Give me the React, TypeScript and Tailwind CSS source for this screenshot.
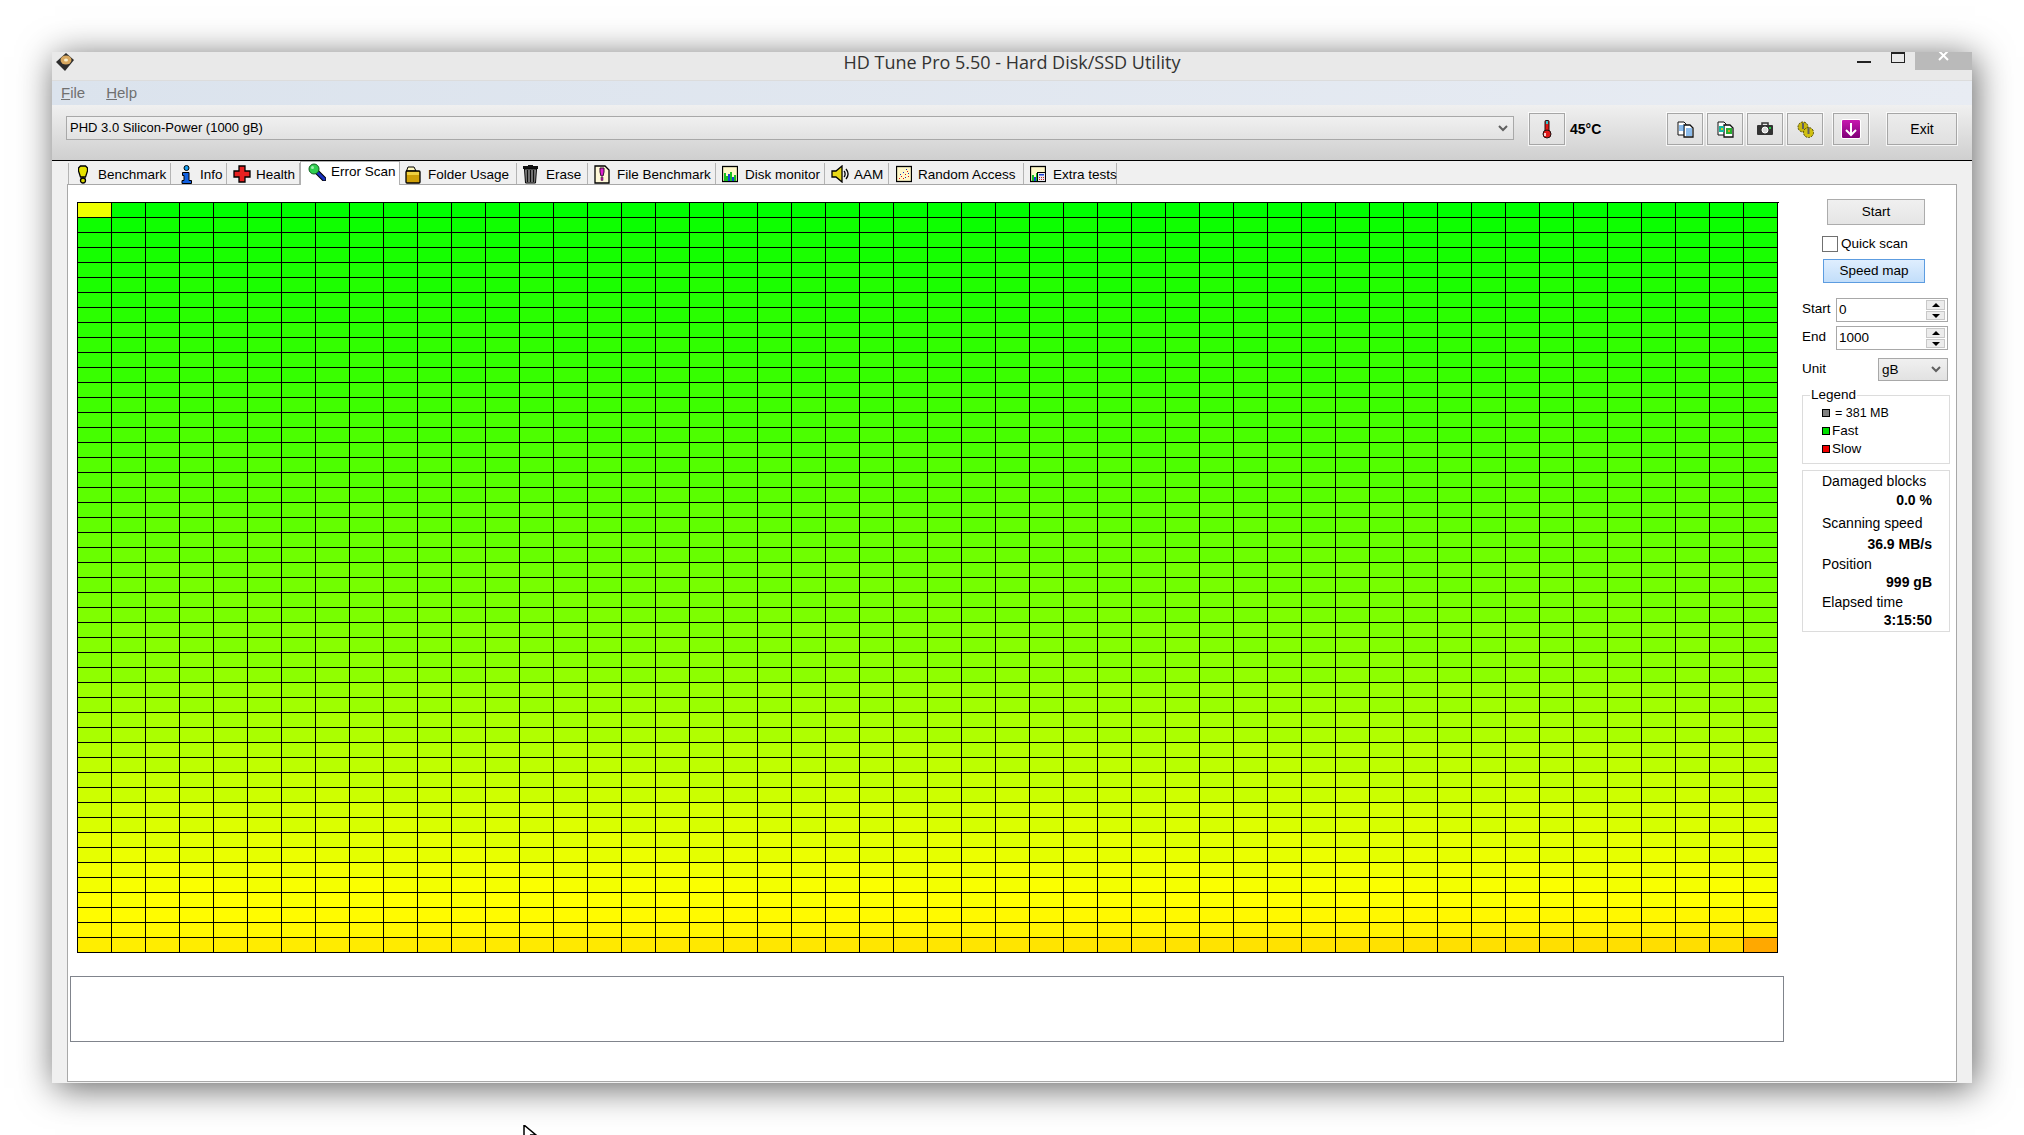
import type { ReactNode } from 'react';

const font = "font-['Liberation_Sans',Arial,sans-serif]";

// colour of one block on the speed map
function cellColor(row: number, col: number) {
  if (row === 0 && col === 0) return '#eeff00';
  if (row === 49 && col === 49) return '#ffa800';
  const noise = ((row * 7 + col * 13) % 5) * 2 - 4;
  let red = row <= 30 ? (row === 0 ? 0 : 10 + row * 4.2) : 136 + (row - 30) * 7.4;
  red = Math.max(0, Math.min(255, Math.round(red + (row === 0 ? 0 : noise))));
  let green = 255;
  if (row === 47) green = 252 - col * 0.1;
  if (row === 48) green = 248 - col * 0.16;
  if (row === 49) green = 238 - col * 0.34;
  return `rgb(${red},${Math.round(green)},0)`;
}

const rows = Array.from({ length: 50 }, (_, i) => i);
const cols = Array.from({ length: 50 }, (_, i) => i);

function Icon({ children, w = 16, h = 16 }: { children: ReactNode; w?: number; h?: number }) {
  return (
    <svg width={w} height={h} viewBox={`0 0 ${w} ${h}`} className="block shrink-0 -mt-[2px]">
      {children}
    </svg>
  );
}

const tabs = [
  {
    label: 'Benchmark', width: 'w-[103px]', pad: 'pl-[9px]', box: 'w-[20px]',
    icon: (
      <Icon w={10} h={19}>
        <path d="M2.500 1h5l2 2v3l-2 6h-5l-2-6v-3z" fill="#e6e200" stroke="#000" strokeWidth="1.300" />
        <circle cx="5" cy="15.500" r="2.500" fill="#d8d400" stroke="#000" strokeWidth="1.300" />
      </Icon>
    ),
  },
  {
    label: 'Info', width: 'w-[56px]', pad: 'pl-[9px]', box: 'w-[20px]',
    icon: (
      <Icon w={13} h={19}>
        <circle cx="6.500" cy="3" r="2.500" fill="#18a0f0" stroke="#000" />
        <path d="M2.500 7.500h6.500v8h2.500v3h-9.500v-3h2v-5h-1.500z" fill="#1060e0" stroke="#000" />
      </Icon>
    ),
  },
  {
    label: 'Health', width: 'w-[73px]', pad: 'pl-[6px]', box: 'w-[23px]',
    icon: (
      <Icon w={18} h={18}>
        <path d="M6 1h6v5h5v6h-5v5h-6v-5h-5v-6h5z" fill="#e82020" stroke="#000" strokeWidth="1.300" />
      </Icon>
    ),
  },
  {
    label: 'Error Scan', width: 'w-[100px]', pad: 'pl-[7px]', box: 'w-[23px]', active: true,
    icon: (
      <Icon w={18} h={18}>
        <path d="M9 9l7 7" stroke="#000" strokeWidth="5" strokeLinecap="round" />
        <path d="M9 9l7 7" stroke="#1830c0" strokeWidth="3" strokeLinecap="round" />
        <circle cx="6" cy="6" r="5" fill="#30d050" stroke="#106020" />
        <circle cx="4.500" cy="4.500" r="1.500" fill="#a0f0b0" />
      </Icon>
    ),
  },
  {
    label: 'Folder Usage', width: 'w-[117px]', pad: 'pl-[5px]', box: 'w-[23px]',
    icon: (
      <Icon w={16} h={19}>
        <path d="M1.500 6l1.500-4h6l2 4z" fill="#fff8c0" stroke="#000" />
        <rect x="1" y="6" width="14" height="12" rx="1" fill="#d0a008" stroke="#000" strokeWidth="1.300" />
        <rect x="2" y="7" width="12" height="3" fill="#f0d040" />
      </Icon>
    ),
  },
  {
    label: 'Erase', width: 'w-[71px]', pad: 'pl-[6px]', box: 'w-[23px]',
    icon: (
      <Icon w={15} h={19}>
        <rect x="0" y="1" width="15" height="3" fill="#101010" />
        <rect x="5" y="0" width="5" height="2" fill="#101010" />
        <path d="M1.500 4h12l-1 14h-10z" fill="#909090" stroke="#000" />
        <path d="M4.500 5v12M7.500 5v12M10.500 5v12" stroke="#101010" strokeWidth="1.500" />
      </Icon>
    ),
  },
  {
    label: 'File Benchmark', width: 'w-[128px]', pad: 'pl-[6px]', box: 'w-[23px]',
    icon: (
      <Icon w={16} h={19}>
        <path d="M1 1h10l4 4v13h-14z" fill="#fff8d8" stroke="#000" strokeWidth="1.300" />
        <path d="M6 3h4v4l-1 4h-2l-1-4z" fill="#e020d0" stroke="#301030" />
        <rect x="7" y="12.500" width="2" height="3" fill="#c010b0" stroke="#301030" strokeWidth="0.500" />
      </Icon>
    ),
  },
  {
    label: 'Disk monitor', width: 'w-[109px]', pad: 'pl-[6px]', box: 'w-[23px]',
    icon: (
      <Icon w={16} h={18}>
        <rect x="0.500" y="1.500" width="15" height="15" fill="#fff8c8" stroke="#000" strokeWidth="1.300" />
        <path d="M2 16v-8h2v8zM4 16v-5h2v5zM8 16v-9h2v9zM12 16v-6h2v6z" fill="#18c020" />
        <path d="M6 16v-7h2v7zM10 16v-4h2v4z" fill="#1840d8" />
      </Icon>
    ),
  },
  {
    label: 'AAM', width: 'w-[64px]', pad: 'pl-[6px]', box: 'w-[23px]',
    icon: (
      <Icon w={18} h={18}>
        <path d="M1 6h4l6-5v16l-6-5h-4z" fill="#e8d818" stroke="#000" strokeWidth="1.300" />
        <path d="M13 6c1.500 1.500 1.500 4.500 0 6M15 4c2.500 3 2.500 7 0 10" fill="none" stroke="#000" strokeWidth="1.300" />
      </Icon>
    ),
  },
  {
    label: 'Random Access', width: 'w-[135px]', pad: 'pl-[7px]', box: 'w-[22px]',
    icon: (
      <Icon w={16} h={18}>
        <rect x="0.500" y="1.500" width="15" height="15" fill="#fff8c8" stroke="#000" strokeWidth="1.300" />
        <path d="M3 13h1v1h-1zM5 11h1v1h-1zM7 13h1v1h-1zM9 9h1v1h-1zM11 6h1v1h-1zM12 11h1v1h-1z" fill="#e01010" />
        <path d="M4 9h1v1h-1zM7 7h1v1h-1zM10 4h1v1h-1zM12 8h1v1h-1zM9 12h1v1h-1z" fill="#1030c0" />
      </Icon>
    ),
  },
  {
    label: 'Extra tests', width: 'w-[93px]', pad: 'pl-[6px]', box: 'w-[23px]',
    icon: (
      <Icon w={16} h={18}>
        <rect x="0.500" y="1.500" width="15" height="15" fill="#fff8c8" stroke="#000" strokeWidth="1.300" />
        <path d="M2 16v-6h2v6zM6 16v-8h1v8z" fill="#18c020" />
        <path d="M4 16v-4h2v4z" fill="#1840d8" />
        <rect x="7.500" y="7.500" width="8" height="9" fill="#e8e8f0" stroke="#000" />
        <rect x="9" y="9" width="5" height="1.500" fill="#1840d8" />
        <path d="M9 12h1v1h-1zM11 12h1v1h-1zM13 12h1v1h-1zM9 14h1v1h-1zM11 14h1v1h-1zM13 14h1v1h-1z" fill="#d02020" />
      </Icon>
    ),
  },
];

function ToolButton({ children, width = 'w-[36px]' }: { children: ReactNode; width?: string }) {
  return (
    <div className={`${width} h-[32px] flex items-center justify-center border border-[#a6a6a6] bg-linear-to-b from-[#ececec] to-[#e0e0e0] shadow-[0_0_0_1px_rgba(255,255,255,0.75)]`}>
      {children}
    </div>
  );
}

function Chevron() {
  return (
    <svg width="10" height="7" viewBox="0 0 10 7" className="block shrink-0">
      <path d="M1 1l4 4 4-4" fill="none" stroke="#606060" strokeWidth="2" />
    </svg>
  );
}

function Spinner() {
  return (
    <div className="ml-auto mr-px w-[19px] h-[20px] flex flex-col gap-px">
      <div className="h-[10px] border border-[#c8c8c8] bg-[#ececec] flex items-center justify-center">
        <div className="w-0 h-0 border-x-[4px] border-x-transparent border-b-[4px] border-b-black" />
      </div>
      <div className="h-[9px] border border-[#c8c8c8] bg-[#ececec] flex items-center justify-center">
        <div className="w-0 h-0 border-x-[4px] border-x-transparent border-t-[4px] border-t-black" />
      </div>
    </div>
  );
}

function NumberField({ label, value, top }: { label: string; value: string; top: string }) {
  return (
    <div className={`${top} flex items-center h-[24px]`}>
      <span className="w-[34px] pb-[3px]">{label}</span>
      <div className="w-[112px] h-[24px] border border-[#a8a8a8] bg-white flex items-center pl-[2px] pr-px">
        <span>{value}</span>
        <Spinner />
      </div>
    </div>
  );
}

export default function App() {
  return (
    <div className={`relative w-[2024px] h-[1135px] overflow-hidden bg-white pl-[52px] pt-[52px] text-[14px] text-black ${font}`}>
      <div className="w-[1920px] h-[1031px] flex flex-col bg-[#f0f0f0] shadow-[3px_5px_34px_rgba(0,0,0,0.62)]">
        {/* title bar */}
        <div className="h-[29px] shrink-0 grid grid-cols-[1fr_auto_1fr] border-b border-[#dcdcdc] bg-[#e9e9e9]">
          <div className="pl-[3px] pt-px">
            <svg width="20" height="18" viewBox="0 0 20 18" className="block">
              <path d="M11 0l8 7-9 11-9-9z" fill="#2c2c2c" />
              <ellipse cx="11" cy="7" rx="5.500" ry="4.500" fill="#d8a860" />
              <ellipse cx="11" cy="7" rx="2" ry="1.500" fill="#f8f0d0" />
            </svg>
          </div>
          <span className="font-['Open_Sans',sans-serif] text-[18px] leading-[20px] text-[#333]">
            HD Tune Pro 5.50 - Hard Disk/SSD Utility
          </span>
          <div className="flex justify-end items-start">
            <div className="w-[14px] h-[2px] mt-[9px] bg-[#222]" />
            <div className="w-[14px] h-[11px] ml-[20px] border border-[#222] border-t-2" />
            <div className="w-[57px] h-[18px] ml-[10px] bg-[#bababa] flex justify-center">
              <svg width="12" height="9" viewBox="0 0 12 9" className="block">
                <path d="M1 -1l9 9M10 -1l-9 9" stroke="#fff" strokeWidth="2" />
              </svg>
            </div>
          </div>
        </div>

        {/* menu */}
        <div className="h-[24px] shrink-0 flex items-center gap-[21px] pl-[9px] pt-px bg-linear-to-r from-[#dbe3ed] to-[#e8ecf3] text-[15px] text-[#707070]">
          <span><span className="underline">F</span>ile</span>
          <span><span className="underline">H</span>elp</span>
        </div>

        {/* toolbar */}
        <div className="h-[56px] shrink-0 flex items-center pb-[7px] pr-[15px] border-b border-black bg-linear-to-b from-[#f0f0f0] to-[#cfcfcf]">
          <div className="ml-[14px] w-[1448px] h-[24px] -mt-[2px] flex items-center justify-between pl-[3px] pr-[5px] border border-[#a8a8a8] bg-linear-to-b from-[#f0f0f0] to-[#e2e2e2] text-[13px]">
            <span>PHD 3.0 Silicon-Power (1000 gB)</span>
            <Chevron />
          </div>
          <div className="ml-[15px]">
            <ToolButton>
              <svg width="12" height="19" viewBox="0 0 12 19" className="block">
                <rect x="4" y="0.500" width="4" height="12" rx="1" fill="#e01818" stroke="#201010" />
                <rect x="5" y="1" width="2" height="3" fill="#30c8d0" />
                <circle cx="6" cy="14" r="4" fill="#e01818" stroke="#201010" />
                <rect x="3" y="13" width="2" height="3" fill="#f8d0d0" />
              </svg>
            </ToolButton>
          </div>
          <span className="ml-[5px] font-bold">45°C</span>
          <div className="ml-auto flex gap-[4px]">
            <ToolButton>
              <svg width="17" height="17" viewBox="0 0 17 17" className="block">
                <path d="M1 1h6l2 2v11h-8z" fill="#fff" stroke="#111" />
                <path d="M7 4h6l3 3v9h-9z" fill="#fff" stroke="#111" strokeWidth="1.300" />
                <path d="M2 5h5M2 7h5M2 9h5M9 8h6M9 10h6M9 12h6M9 14h6" stroke="#1878d8" />
              </svg>
            </ToolButton>
            <ToolButton>
              <svg width="17" height="17" viewBox="0 0 17 17" className="block">
                <path d="M1 1h6l2 2v11h-8z" fill="#fff" stroke="#111" />
                <path d="M7 4h6l3 3v9h-9z" fill="#fff" stroke="#111" strokeWidth="1.300" />
                <rect x="2" y="5" width="5" height="6" fill="#18b8a0" />
                <rect x="9" y="7" width="6" height="6" fill="#28b030" />
                <rect x="4" y="7" width="2" height="2" fill="#d0d020" />
                <rect x="11" y="9" width="2" height="2" fill="#d0a020" />
              </svg>
            </ToolButton>
            <ToolButton>
              <svg width="16" height="14" viewBox="0 0 16 14" className="block">
                <path d="M5 3v-2h6v2" fill="none" stroke="#333" strokeWidth="1.500" />
                <rect x="0" y="3" width="16" height="10" rx="1" fill="#333" />
                <circle cx="8" cy="8" r="3" fill="#d8d8d8" stroke="#fff" />
                <rect x="12" y="5" width="2" height="2" fill="#20d040" />
              </svg>
            </ToolButton>
            <ToolButton>
              <svg width="17" height="17" viewBox="0 0 17 17" className="block">
                <circle cx="6" cy="6" r="5" fill="#c8b810" stroke="#504800" strokeDasharray="2 1" />
                <circle cx="11.500" cy="11.500" r="5" fill="#d0c010" stroke="#504800" strokeDasharray="2 1" />
                <path d="M6 2v6M11.500 7v6" stroke="#606060" strokeWidth="2" />
              </svg>
            </ToolButton>
          </div>
          <div className="ml-[10px]">
            <ToolButton>
              <div className="w-[20px] h-[20px] rounded-[2px] border border-white bg-linear-to-b from-[#c818b0] to-[#800078] flex items-center justify-center">
                <svg width="14" height="15" viewBox="0 0 14 15" className="block">
                  <path d="M7 1v11M2 8l5 5 5-5" fill="none" stroke="#fff" strokeWidth="2" />
                </svg>
              </div>
            </ToolButton>
          </div>
          <div className="ml-[18px]">
            <ToolButton width="w-[70px]">Exit</ToolButton>
          </div>
        </div>

        {/* tabs */}
        <div className="h-[23px] shrink-0 flex items-start pt-[2px] pl-[16px] text-[13.500px]">
          {tabs.map((tab) => (
            <div
              key={tab.label}
              className={
                tab.active
                  ? `${tab.width} ${tab.pad} relative h-[24px] -mt-[2px] flex items-center border-x border-t border-[#b0b0b0] bg-white pb-[2px]`
                  : `${tab.width} ${tab.pad} h-[21px] flex items-center border-r first:border-l border-[#b4b4b4] bg-[#f0f0f0] pt-[3px]`
              }
            >
              <span className={`${tab.box} shrink-0`}>{tab.icon}</span>
              <span className="whitespace-nowrap">{tab.label}</span>
            </div>
          ))}
        </div>

        {/* page */}
        <div className="mx-[15px] mb-px flex-1 flex border border-[#a8a8a8] bg-white">
          <div className="w-[1716px] shrink-0 pl-[2px] pt-[17px]">
            <div className="ml-[7px] w-[1701px] grid grid-cols-[repeat(50,34px)] auto-rows-[15px] border-l border-t border-black box-content">
              {rows.map((row) =>
                cols.map((col) => (
                  <div
                    key={`${row}-${col}`}
                    className="border-r border-b border-black"
                    style={{ backgroundColor: cellColor(row, col) }}
                  />
                )),
              )}
            </div>
            <div className="mt-[23px] w-[1714px] h-[66px] border border-[#80848c] bg-white" />
          </div>

          <div className="ml-[18px] w-[148px] shrink-0 leading-[18px] text-[13.500px]">
            <div className="mt-[14px] ml-[25px] w-[98px] h-[26px] flex items-center justify-center border border-[#acacac] bg-linear-to-b from-[#f0f0f0] to-[#e5e5e5]">
              Start
            </div>
            <div className="mt-[11px] ml-[20px] flex items-center h-[16px]">
              <div className="w-[16px] h-[16px] border border-[#707070] bg-white" />
              <span className="ml-[3px]">Quick scan</span>
            </div>
            <div className="mt-[7px] ml-[21px] w-[102px] h-[24px] flex items-center justify-center border border-[#5c9ce0] bg-linear-to-b from-[#dfeefe] to-[#c2defa]">
              Speed map
            </div>
            <NumberField label="Start" value="0" top="mt-[15px]" />
            <NumberField label="End" value="1000" top="mt-[4px]" />
            <div className="mt-[8px] flex items-center h-[23px]">
              <span className="w-[76px] pb-[2px]">Unit</span>
              <div className="w-[70px] h-[23px] flex items-center justify-between pl-[3px] pr-[6px] border border-[#a8a8a8] bg-linear-to-b from-[#f0f0f0] to-[#e2e2e2]">
                <span>gB</span>
                <Chevron />
              </div>
            </div>
            <fieldset className="mt-[6px] border border-[#dcdcdc] pl-[19px] pb-[5px]">
              <legend className="-ml-[12px] px-[1px] h-[16px] leading-[16px]">Legend</legend>
              <div className="h-[18px] mt-[1px] flex items-center">
                <div className="w-[8px] h-[8px] border border-black bg-[#808080]" />
                <span className="ml-[5px] text-[12.500px]">= 381 MB</span>
              </div>
              <div className="h-[18px] flex items-center">
                <div className="w-[8px] h-[8px] border border-black bg-[#00e000]" />
                <span className="ml-[2px]">Fast</span>
              </div>
              <div className="h-[18px] flex items-center">
                <div className="w-[8px] h-[8px] border border-black bg-[#f00000]" />
                <span className="ml-[2px]">Slow</span>
              </div>
            </fieldset>
            <div className="mt-[6px] h-[162px] border border-[#dcdcdc] pl-[19px] pr-[17px] text-[14px]">
              <div className="mt-px">Damaged blocks</div>
              <div className="mt-px text-right font-bold">0.0 %</div>
              <div className="mt-[5px]">Scanning speed</div>
              <div className="mt-[3px] text-right font-bold">36.9 MB/s</div>
              <div className="mt-[2px]">Position</div>
              <div className="text-right font-bold">999 gB</div>
              <div className="mt-[2px]">Elapsed time</div>
              <div className="text-right font-bold">3:15:50</div>
            </div>
          </div>
        </div>
      </div>

      {/* mouse pointer */}
      <svg width="16" height="16" viewBox="0 0 16 16" className="absolute left-[523px] top-[1125px]">
        <path d="M1 0v14l4-3 3 5h3l-3-6h5z" fill="#fff" stroke="#000" strokeWidth="1.500" />
      </svg>
    </div>
  );
}
